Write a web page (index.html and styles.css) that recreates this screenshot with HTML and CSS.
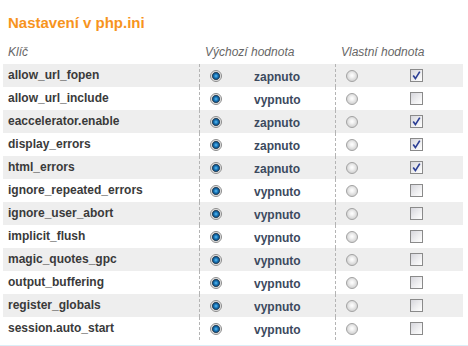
FILE: index.html
```html
<!DOCTYPE html>
<html lang="cs">
<head>
<meta charset="utf-8">
<title>Nastavení v php.ini</title>
<link rel="stylesheet" href="styles.css">
</head>
<body>
<div class="panel">
  <h2 class="title">Nastavení v php.ini</h2>
  <table class="ini">
    <colgroup>
      <col class="c-key"><col class="c-rd"><col class="c-val"><col class="c-rc"><col class="c-cb">
    </colgroup>
    <thead>
      <tr>
        <th class="h-key">Klíč</th>
        <th class="h-grp" colspan="2">Výchozí hodnota</th>
        <th class="h-grp" colspan="2">Vlastní hodnota</th>
      </tr>
    </thead>
    <tbody>
      <tr><td class="key">allow_url_fopen</td><td class="rd"><span class="radio on"></span></td><td class="val">zapnuto</td><td class="rc"><span class="radio"></span></td><td class="cb"><span class="check on"><svg viewBox="0 0 11 11" width="11" height="11"><path d="M2.2 5.6 L4.4 8.6 L8.8 1.6" fill="none" stroke="#2c3f95" stroke-width="1.7"/></svg></span></td></tr>
      <tr><td class="key">allow_url_include</td><td class="rd"><span class="radio on"></span></td><td class="val">vypnuto</td><td class="rc"><span class="radio"></span></td><td class="cb"><span class="check"></span></td></tr>
      <tr><td class="key">eaccelerator.enable</td><td class="rd"><span class="radio on"></span></td><td class="val">zapnuto</td><td class="rc"><span class="radio"></span></td><td class="cb"><span class="check on"><svg viewBox="0 0 11 11" width="11" height="11"><path d="M2.2 5.6 L4.4 8.6 L8.8 1.6" fill="none" stroke="#2c3f95" stroke-width="1.7"/></svg></span></td></tr>
      <tr><td class="key">display_errors</td><td class="rd"><span class="radio on"></span></td><td class="val">zapnuto</td><td class="rc"><span class="radio"></span></td><td class="cb"><span class="check on"><svg viewBox="0 0 11 11" width="11" height="11"><path d="M2.2 5.6 L4.4 8.6 L8.8 1.6" fill="none" stroke="#2c3f95" stroke-width="1.7"/></svg></span></td></tr>
      <tr><td class="key">html_errors</td><td class="rd"><span class="radio on"></span></td><td class="val">zapnuto</td><td class="rc"><span class="radio"></span></td><td class="cb"><span class="check on"><svg viewBox="0 0 11 11" width="11" height="11"><path d="M2.2 5.6 L4.4 8.6 L8.8 1.6" fill="none" stroke="#2c3f95" stroke-width="1.7"/></svg></span></td></tr>
      <tr><td class="key">ignore_repeated_errors</td><td class="rd"><span class="radio on"></span></td><td class="val">vypnuto</td><td class="rc"><span class="radio"></span></td><td class="cb"><span class="check"></span></td></tr>
      <tr><td class="key">ignore_user_abort</td><td class="rd"><span class="radio on"></span></td><td class="val">vypnuto</td><td class="rc"><span class="radio"></span></td><td class="cb"><span class="check"></span></td></tr>
      <tr><td class="key">implicit_flush</td><td class="rd"><span class="radio on"></span></td><td class="val">vypnuto</td><td class="rc"><span class="radio"></span></td><td class="cb"><span class="check"></span></td></tr>
      <tr><td class="key">magic_quotes_gpc</td><td class="rd"><span class="radio on"></span></td><td class="val">vypnuto</td><td class="rc"><span class="radio"></span></td><td class="cb"><span class="check"></span></td></tr>
      <tr><td class="key">output_buffering</td><td class="rd"><span class="radio on"></span></td><td class="val">vypnuto</td><td class="rc"><span class="radio"></span></td><td class="cb"><span class="check"></span></td></tr>
      <tr><td class="key">register_globals</td><td class="rd"><span class="radio on"></span></td><td class="val">vypnuto</td><td class="rc"><span class="radio"></span></td><td class="cb"><span class="check"></span></td></tr>
      <tr><td class="key">session.auto_start</td><td class="rd"><span class="radio on"></span></td><td class="val">vypnuto</td><td class="rc"><span class="radio"></span></td><td class="cb"><span class="check"></span></td></tr>
    </tbody>
  </table>
  <div class="footer-line"></div>
</div>
</body>
</html>
```
FILE: styles.css
```css
html, body {
  margin: 0;
  padding: 0;
  background: #ffffff;
}
body {
  font-family: "Liberation Sans", Arial, sans-serif;
  font-size: 12px;
  color: #333333;
}
.panel {
  padding: 0 5px 0 3px;
}
.title {
  margin: 0;
  padding: 14px 0 0 5px;
  font-size: 15px;
  line-height: 18px;
  font-weight: bold;
  color: #f7941d;
}
.ini {
  width: 460px;
  border-collapse: collapse;
  table-layout: fixed;
}
.c-key { width: 196px; }
.c-rd { width: 34px; }
.c-val { width: 102px; }
.c-rc { width: 50px; }
.c-cb { width: 78px; }
.ini th {
  font-style: italic;
  font-weight: normal;
  color: #666666;
  text-align: left;
  line-height: 14px;
  padding: 13px 0 5px 6px;
}
.ini th.h-key {
  padding-left: 5px;
}
.ini td {
  height: 23px;
  padding: 0;
  box-sizing: border-box;
  vertical-align: top;
  line-height: 14px;
}
.ini tbody tr:nth-child(odd) td {
  background: #eeeeee;
}
.ini td.key {
  padding: 4px 0 5px 5px;
  font-weight: bold;
  color: #3a3a3a;
  white-space: nowrap;
}
.ini td.rd, .ini td.rc {
  border-left: 1px dashed #b4b4b4;
  padding: 6px 0 0 10px;
}
.ini td.val {
  padding: 6px 0 3px 21px;
  font-weight: bold;
  color: #3c4a5e;
}
.ini td.cb {
  padding: 5px 0 0 25px;
}
.radio {
  display: block;
  width: 12px;
  height: 12px;
  border-radius: 50%;
  box-sizing: border-box;
  border: 1px solid #a3a3a3;
  background: radial-gradient(circle at 50% 45%, #ffffff 0, #f2f2f2 2px, #d6d6d6 5px);
}
.radio.on {
  border-color: #8c8c8c;
  background: radial-gradient(circle at 50% 50%, #6cc4f2 0, #2a8fd0 1.2px, #1467a6 2.4px, #0f3f66 3.4px, #6c6c6c 3.9px, #d4d4d4 4.3px, #f6f6f6 5.2px);
}
.check {
  display: block;
  width: 13px;
  height: 13px;
  box-sizing: border-box;
  border: 1px solid #8a8a8a;
  background: linear-gradient(135deg, #d6d6dc 0%, #eeeef0 55%, #ffffff 100%);
}
.check svg {
  display: block;
}
.footer-line {
  margin: 5px -5px 0 -3px;
  border-top: 1px solid #dbeef7;
}
```
